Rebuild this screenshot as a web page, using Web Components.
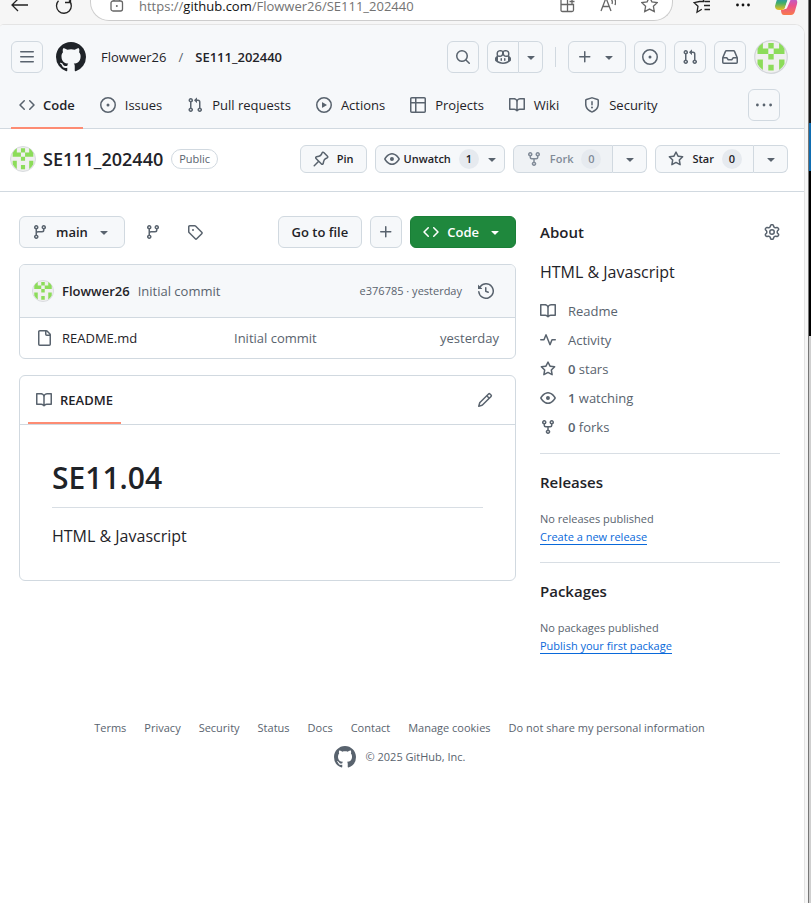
<!DOCTYPE html>
<html lang="en">
<head>
<meta charset="utf-8">
<title>Flowwer26/SE111_202440</title>
<style>
  html { height: 100%; }
  body {
    margin: 0;
    min-height: 100%;
    display: flex;
    background: #f6f6f6;
    color: #1f2328;
    font-family: "Open Sans", "Noto Sans", sans-serif;
    font-size: 13px;
    line-height: 20px;
    --muted: #59636e;
    --line: #d1d9e0;
    --soft: #f6f8fa;
    --accent: #fd8c73;
  }
</style>
</head>
<body>
<app-window></app-window>
<desktop-edge></desktop-edge>

<script>
const ICONS = {
  menu: 'M1 2.75A.75.75 0 0 1 1.75 2h12.5a.75.75 0 0 1 0 1.5H1.75A.75.75 0 0 1 1 2.75Zm0 5A.75.75 0 0 1 1.75 7h12.5a.75.75 0 0 1 0 1.5H1.75A.75.75 0 0 1 1 7.75ZM1.75 12h12.5a.75.75 0 0 1 0 1.5H1.75a.75.75 0 0 1 0-1.5Z',
  mark: 'M8 0c4.42 0 8 3.58 8 8a8.013 8.013 0 0 1-5.45 7.59c-.4.08-.55-.17-.55-.38 0-.27.01-1.13.01-2.2 0-.75-.25-1.23-.54-1.48 1.78-.2 3.65-.88 3.65-3.95 0-.88-.31-1.59-.82-2.15.08-.2.36-1.02-.08-2.12 0 0-.67-.22-2.2.82-.64-.18-1.32-.27-2-.27-.68 0-1.36.09-2 .27-1.53-1.03-2.2-.82-2.2-.82-.44 1.1-.16 1.92-.08 2.12-.51.56-.82 1.28-.82 2.15 0 3.06 1.86 3.75 3.64 3.95-.23.2-.44.55-.51 1.07-.46.21-1.61.55-2.33-.66-.15-.24-.6-.83-1.23-.82-.67.01-.27.38.01.53.34.19.73.9.82 1.13.16.45.68 1.31 2.69.94 0 .67.01 1.3.01 1.49 0 .21-.15.45-.55.38A7.995 7.995 0 0 1 0 8c0-4.42 3.58-8 8-8Z',
  search: 'M10.68 11.74a6 6 0 0 1-7.922-8.982 6 6 0 0 1 8.982 7.922l3.04 3.04a.749.749 0 0 1-.326 1.275.749.749 0 0 1-.734-.215ZM11.5 7a4.499 4.499 0 1 0-8.997 0A4.499 4.499 0 0 0 11.5 7Z',
  copilot: 'M7.998 15.035c-4.562 0-7.873-2.914-7.998-3.749V9.338c.085-.628.677-1.686 1.588-2.065.013-.07.024-.143.036-.218.029-.183.06-.384.126-.612-.201-.508-.254-1.084-.254-1.656 0-.87.128-1.769.693-2.484.579-.733 1.494-1.124 2.724-1.261 1.206-.134 2.262.034 2.944.765.05.053.096.108.139.165.044-.057.094-.112.143-.165.682-.731 1.738-.899 2.944-.765 1.23.137 2.145.528 2.724 1.261.566.715.693 1.614.693 2.484 0 .572-.053 1.148-.254 1.656.066.228.098.429.126.612.012.076.024.148.037.218.924.385 1.522 1.471 1.591 2.095v1.872c0 .766-3.351 3.795-8.002 3.795Zm0-1.485c2.28 0 4.584-1.11 5.002-1.433V7.862l-.023-.116c-.49.21-1.075.291-1.727.291-1.146 0-2.059-.327-2.71-.991A3.222 3.222 0 0 1 8 6.303a3.24 3.24 0 0 1-.544.743c-.65.664-1.563.991-2.71.991-.652 0-1.236-.081-1.727-.291l-.023.116v4.255c.419.323 2.722 1.433 5.002 1.433ZM6.762 2.83c-.193-.206-.637-.413-1.682-.297-1.019.113-1.479.404-1.713.7-.247.312-.369.789-.369 1.554 0 .793.129 1.171.308 1.371.162.181.519.379 1.442.379.853 0 1.339-.235 1.638-.54.315-.322.527-.827.617-1.553.117-.935-.037-1.395-.241-1.614Zm4.155-.297c-1.044-.116-1.488.091-1.681.297-.204.219-.359.679-.242 1.614.091.726.303 1.231.618 1.553.299.305.784.54 1.638.54.922 0 1.28-.198 1.442-.379.179-.2.308-.578.308-1.371 0-.765-.123-1.242-.37-1.554-.233-.296-.693-.587-1.713-.7Z M6.25 9.037a.75.75 0 0 1 .75.75v1.501a.75.75 0 0 1-1.5 0V9.787a.75.75 0 0 1 .75-.75Zm4.25.75v1.501a.75.75 0 0 1-1.5 0V9.787a.75.75 0 0 1 1.5 0Z',
  caret: 'm4.427 7.427 3.396 3.396a.25.25 0 0 0 .354 0l3.396-3.396A.25.25 0 0 0 11.396 7H4.604a.25.25 0 0 0-.177.427Z',
  plus: 'M7.75 2a.75.75 0 0 1 .75.75V7h4.25a.75.75 0 0 1 0 1.5H8.5v4.25a.75.75 0 0 1-1.5 0V8.5H2.75a.75.75 0 0 1 0-1.5H7V2.75A.75.75 0 0 1 7.75 2Z',
  issue: 'M8 9.5a1.5 1.5 0 1 0 0-3 1.5 1.5 0 0 0 0 3Z M8 0a8 8 0 1 1 0 16A8 8 0 0 1 8 0ZM1.5 8a6.5 6.5 0 1 0 13 0 6.5 6.5 0 0 0-13 0Z',
  pull: 'M1.5 3.25a2.25 2.25 0 1 1 3 2.122v5.256a2.251 2.251 0 1 1-1.5 0V5.372A2.25 2.25 0 0 1 1.5 3.25Zm5.677-.177L9.573.677A.25.25 0 0 1 10 .854V2.5h1A2.5 2.5 0 0 1 13.5 5v5.628a2.251 2.251 0 1 1-1.5 0V5a1 1 0 0 0-1-1h-1v1.646a.25.25 0 0 1-.427.177L7.177 3.427a.25.25 0 0 1 0-.354ZM3.75 2.5a.75.75 0 1 0 0 1.5.75.75 0 0 0 0-1.5Zm0 9.5a.75.75 0 1 0 0 1.5.75.75 0 0 0 0-1.5Zm8.25.75a.75.75 0 1 0 1.5 0 .75.75 0 0 0-1.5 0Z',
  inbox: 'M2.8 2.06A1.75 1.75 0 0 1 4.41 1h7.18c.7 0 1.333.417 1.61 1.06l2.74 6.395c.04.093.06.194.06.295v4.5A1.75 1.75 0 0 1 14.25 15H1.75A1.75 1.75 0 0 1 0 13.25v-4.5c0-.101.02-.202.06-.295Zm1.61.44a.25.25 0 0 0-.23.152L1.887 8H4.75a.75.75 0 0 1 .6.3L6.625 10h2.75l1.275-1.7a.75.75 0 0 1 .6-.3h2.863L11.82 2.652a.25.25 0 0 0-.23-.152Zm10.09 7h-2.875l-1.275 1.7a.75.75 0 0 1-.6.3h-3.5a.75.75 0 0 1-.6-.3L4.375 9.5H1.5v3.75c0 .138.112.25.25.25h12.5a.25.25 0 0 0 .25-.25Z',
  code: 'm11.28 3.22 4.25 4.25a.75.75 0 0 1 0 1.06l-4.25 4.25a.749.749 0 0 1-1.275-.326.749.749 0 0 1 .215-.734L13.94 8l-3.72-3.72a.749.749 0 0 1 .326-1.275.749.749 0 0 1 .734.215Zm-6.56 0a.751.751 0 0 1 1.042.018.751.751 0 0 1 .018 1.042L2.06 8l3.72 3.72a.749.749 0 0 1-.326 1.275.749.749 0 0 1-.734-.215L.47 8.53a.75.75 0 0 1 0-1.06Z',
  play: 'M8 0a8 8 0 1 1 0 16A8 8 0 0 1 8 0ZM1.5 8a6.5 6.5 0 1 0 13 0 6.5 6.5 0 0 0-13 0Zm4.879-2.773 4.264 2.559a.25.25 0 0 1 0 .428l-4.264 2.559A.25.25 0 0 1 6 10.559V5.442a.25.25 0 0 1 .379-.215Z',
  table: 'M0 1.75C0 .784.784 0 1.75 0h12.5C15.216 0 16 .784 16 1.75v12.5A1.75 1.75 0 0 1 14.25 16H1.75A1.75 1.75 0 0 1 0 14.25ZM6.5 6.5v8h7.75a.25.25 0 0 0 .25-.25V6.5Zm8-1.5V1.75a.25.25 0 0 0-.25-.25H6.5V5Zm-13 1.5v7.75c0 .138.112.25.25.25H5v-8ZM5 5V1.5H1.75a.25.25 0 0 0-.25.25V5Z',
  book: 'M0 1.75A.75.75 0 0 1 .75 1h4.253c1.227 0 2.317.59 3 1.501A3.743 3.743 0 0 1 11.006 1h4.245a.75.75 0 0 1 .75.75v10.5a.75.75 0 0 1-.75.75h-4.507a2.25 2.25 0 0 0-1.591.659l-.622.621a.75.75 0 0 1-1.06 0l-.622-.621A2.25 2.25 0 0 0 5.258 13H.75a.75.75 0 0 1-.75-.75Zm7.251 10.324.004-5.073-.002-2.253A2.25 2.25 0 0 0 5.003 2.5H1.5v9h3.757a3.75 3.75 0 0 1 1.994.574ZM8.755 4.75l-.004 7.322a3.752 3.752 0 0 1 1.992-.572H14.5v-9h-3.495a2.25 2.25 0 0 0-2.25 2.25Z',
  shield: 'M7.467.133a1.748 1.748 0 0 1 1.066 0l5.25 1.68A1.75 1.75 0 0 1 15 3.48V7c0 1.566-.32 3.182-1.303 4.682-.983 1.498-2.585 2.813-5.032 3.855a1.697 1.697 0 0 1-1.33 0c-2.447-1.042-4.049-2.357-5.032-3.855C1.32 10.182 1 8.566 1 7V3.48a1.755 1.755 0 0 1 1.217-1.667Zm.61 1.429a.25.25 0 0 0-.153 0l-5.25 1.68a.25.25 0 0 0-.174.238V7c0 1.358.275 2.666 1.057 3.86.784 1.194 2.121 2.34 4.366 3.297a.196.196 0 0 0 .154 0c2.245-.956 3.582-2.104 4.366-3.298C13.225 9.666 13.5 8.36 13.5 7V3.48a.251.251 0 0 0-.174-.237l-5.25-1.68ZM8.75 4.75v3a.75.75 0 0 1-1.5 0v-3a.75.75 0 0 1 1.5 0ZM9 10.5a1 1 0 1 1-2 0 1 1 0 0 1 2 0Z',
  dots: 'M0 8a1.4 1.4 0 1 1 2.8 0 1.4 1.4 0 0 1-2.8 0ZM6.6 8a1.4 1.4 0 1 1 2.8 0 1.4 1.4 0 0 1-2.8 0ZM13.2 8a1.4 1.4 0 1 1 2.8 0 1.4 1.4 0 0 1-2.8 0Z',
  pin: 'm11.294.984 3.722 3.722a1.75 1.75 0 0 1-.504 2.826l-1.327.613a3.089 3.089 0 0 0-1.707 2.084l-.584 2.454c-.317 1.332-1.972 1.8-2.94.832L5.75 11.311 1.78 15.28a.749.749 0 1 1-1.06-1.06l3.969-3.97-2.204-2.204c-.968-.968-.5-2.623.832-2.94l2.454-.584a3.08 3.08 0 0 0 2.084-1.707l.613-1.327a1.75 1.75 0 0 1 2.826-.504ZM6.283 9.723l2.732 2.731a.25.25 0 0 0 .42-.119l.584-2.454a4.586 4.586 0 0 1 2.537-3.098l1.328-.613a.25.25 0 0 0 .072-.404l-3.722-3.722a.25.25 0 0 0-.404.072l-.613 1.328a4.584 4.584 0 0 1-3.098 2.537l-2.454.584a.25.25 0 0 0-.119.42l2.731 2.732Z',
  eye: 'M8 2c1.981 0 3.671.992 4.933 2.078 1.27 1.091 2.187 2.345 2.637 3.023a1.62 1.62 0 0 1 0 1.798c-.45.678-1.367 1.932-2.637 3.023C11.67 13.008 9.981 14 8 14c-1.981 0-3.671-.992-4.933-2.078C1.797 10.83.88 9.576.43 8.898a1.62 1.62 0 0 1 0-1.798c.45-.677 1.367-1.931 2.637-3.022C4.33 2.992 6.019 2 8 2ZM1.679 7.932a.12.12 0 0 0 0 .136c.411.622 1.241 1.75 2.366 2.717C5.176 11.758 6.527 12.5 8 12.5c1.473 0 2.825-.742 3.955-1.715 1.124-.967 1.954-2.096 2.366-2.717a.12.12 0 0 0 0-.136c-.412-.621-1.242-1.75-2.366-2.717C10.824 4.242 9.473 3.5 8 3.5c-1.473 0-2.825.742-3.955 1.715-1.124.967-1.954 2.096-2.366 2.717ZM8 10a2 2 0 1 1-.001-3.999A2 2 0 0 1 8 10Z',
  fork: 'M5 5.372v.878c0 .414.336.75.75.75h4.5a.75.75 0 0 0 .75-.75v-.878a2.25 2.25 0 1 1 1.5 0v.878a2.25 2.25 0 0 1-2.25 2.25h-1.5v2.128a2.251 2.251 0 1 1-1.5 0V8.5h-1.5A2.25 2.25 0 0 1 3.5 6.25v-.878a2.25 2.25 0 1 1 1.5 0ZM5 3.25a.75.75 0 1 0-1.5 0 .75.75 0 0 0 1.5 0Zm6.75.75a.75.75 0 1 0 0-1.5.75.75 0 0 0 0 1.5Zm-3 8.75a.75.75 0 1 0-1.5 0 .75.75 0 0 0 1.5 0Z',
  star: 'M8 .25a.75.75 0 0 1 .673.418l1.882 3.815 4.21.612a.75.75 0 0 1 .416 1.279l-3.046 2.97.719 4.192a.751.751 0 0 1-1.088.791L8 12.347l-3.766 1.98a.75.75 0 0 1-1.088-.79l.72-4.194L.818 6.374a.75.75 0 0 1 .416-1.28l4.21-.611L7.327.668A.75.75 0 0 1 8 .25Zm0 2.445L6.615 5.5a.75.75 0 0 1-.564.41l-3.097.45 2.24 2.184a.75.75 0 0 1 .216.664l-.528 3.084 2.769-1.456a.75.75 0 0 1 .698 0l2.77 1.456-.53-3.084a.75.75 0 0 1 .216-.664l2.24-2.183-3.096-.45a.75.75 0 0 1-.564-.41L8 2.694Z',
  branch: 'M9.5 3.25a2.25 2.25 0 1 1 3 2.122V6A2.5 2.5 0 0 1 10 8.5H6a1 1 0 0 0-1 1v1.128a2.251 2.251 0 1 1-1.5 0V5.372a2.25 2.25 0 1 1 1.5 0v1.836A2.493 2.493 0 0 1 6 7h4a1 1 0 0 0 1-1v-.628A2.25 2.25 0 0 1 9.5 3.25Zm-6 0a.75.75 0 1 0 1.5 0 .75.75 0 0 0-1.5 0Zm8.25-.75a.75.75 0 1 0 0 1.5.75.75 0 0 0 0-1.5ZM4.25 12a.75.75 0 1 0 0 1.5.75.75 0 0 0 0-1.5Z',
  tag: 'M1 7.775V2.75C1 1.784 1.784 1 2.75 1h5.025c.464 0 .91.184 1.238.513l6.25 6.25a1.75 1.75 0 0 1 0 2.474l-5.026 5.026a1.75 1.75 0 0 1-2.474 0l-6.25-6.25A1.752 1.752 0 0 1 1 7.775Zm1.5 0c0 .066.026.13.073.177l6.25 6.25a.25.25 0 0 0 .354 0l5.025-5.025a.25.25 0 0 0 0-.354l-6.25-6.25a.25.25 0 0 0-.177-.073H2.75a.25.25 0 0 0-.25.25ZM6 5a1 1 0 1 1 0 2 1 1 0 0 1 0-2Z',
  history: 'm.427 1.927 1.215 1.215a8.002 8.002 0 1 1-1.6 5.685.75.75 0 1 1 1.493-.154 6.5 6.5 0 1 0 1.18-4.458l1.358 1.358A.25.25 0 0 1 3.896 6H.25A.25.25 0 0 1 0 5.75V2.104a.25.25 0 0 1 .427-.177ZM7.75 4a.75.75 0 0 1 .75.75v2.992l2.028.812a.75.75 0 0 1-.557 1.392l-2.5-1A.751.751 0 0 1 7 8.25v-3.5A.75.75 0 0 1 7.75 4Z',
  file: 'M2 1.75C2 .784 2.784 0 3.75 0h6.586c.464 0 .909.184 1.237.513l2.914 2.914c.329.328.513.773.513 1.237v9.586A1.75 1.75 0 0 1 13.25 16h-9.5A1.75 1.75 0 0 1 2 14.25Zm1.75-.25a.25.25 0 0 0-.25.25v12.5c0 .138.112.25.25.25h9.5a.25.25 0 0 0 .25-.25V6h-2.75A1.75 1.75 0 0 1 9 4.25V1.5Zm6.75.062V4.25c0 .138.112.25.25.25h2.688l-.011-.013-2.914-2.914-.013-.011Z',
  pencil: 'M11.013 1.427a1.75 1.75 0 0 1 2.474 0l1.086 1.086a1.75 1.75 0 0 1 0 2.474l-8.61 8.61c-.21.21-.47.364-.756.445l-3.251.93a.75.75 0 0 1-.927-.928l.929-3.25c.081-.286.235-.547.445-.758l8.61-8.61Zm.176 4.823L9.75 4.81l-6.286 6.287a.253.253 0 0 0-.064.108l-.558 1.953 1.953-.558a.253.253 0 0 0 .108-.064Zm1.238-3.763a.25.25 0 0 0-.354 0L10.811 3.75l1.439 1.44 1.263-1.263a.25.25 0 0 0 0-.354Z',
  pulse: 'M6 2c.306 0 .582.187.696.471L10 10.731l1.304-3.26A.751.751 0 0 1 12 7h3.25a.75.75 0 0 1 0 1.5h-2.742l-1.812 4.528a.751.751 0 0 1-1.392 0L6 4.77 4.696 8.03A.75.75 0 0 1 4 8.5H.75a.75.75 0 0 1 0-1.5h2.742l1.812-4.529A.751.751 0 0 1 6 2Z',
  gear: 'M8 0a8.2 8.2 0 0 1 .701.031C9.444.095 9.99.645 10.16 1.29l.288 1.107c.018.066.079.158.212.224.231.114.454.243.668.386.123.082.233.09.299.071l1.103-.303c.644-.176 1.392.021 1.82.63.27.385.506.792.704 1.218.315.675.111 1.422-.364 1.891l-.814.806c-.049.048-.098.147-.088.294.016.257.016.515 0 .772-.01.147.038.246.088.294l.814.806c.475.469.679 1.216.364 1.891a7.977 7.977 0 0 1-.704 1.217c-.428.61-1.176.807-1.82.63l-1.102-.302c-.067-.019-.177-.011-.3.071a5.909 5.909 0 0 1-.668.386c-.133.066-.194.158-.211.224l-.29 1.106c-.168.646-.715 1.196-1.458 1.26a8.006 8.006 0 0 1-1.402 0c-.743-.064-1.289-.614-1.458-1.26l-.289-1.106c-.018-.066-.079-.158-.212-.224a5.738 5.738 0 0 1-.668-.386c-.123-.082-.233-.09-.299-.071l-1.103.303c-.644.176-1.392-.021-1.82-.63a8.12 8.12 0 0 1-.704-1.218c-.315-.675-.111-1.422.363-1.891l.815-.806c.05-.048.098-.147.088-.294a6.214 6.214 0 0 1 0-.772c.01-.147-.038-.246-.088-.294l-.815-.806C.635 6.045.431 5.298.746 4.623a7.92 7.92 0 0 1 .704-1.217c.428-.61 1.176-.807 1.82-.63l1.102.302c.067.019.177.011.3-.071.214-.143.437-.272.668-.386.133-.066.194-.158.211-.224l.29-1.106C6.009.645 6.556.095 7.299.03 7.53.01 7.764 0 8 0Zm-.571 1.525c-.036.003-.108.036-.137.146l-.289 1.105c-.147.561-.549.967-.998 1.189-.173.086-.34.183-.5.29-.417.278-.97.423-1.529.27l-1.103-.303c-.109-.03-.175.016-.195.045-.22.312-.412.644-.573.99-.014.031-.021.11.059.19l.815.806c.411.406.562.957.53 1.456a4.709 4.709 0 0 0 0 .582c.032.499-.119 1.05-.53 1.456l-.815.806c-.081.08-.073.159-.059.19.162.346.353.677.573.989.02.03.085.076.195.046l1.102-.303c.56-.153 1.113-.008 1.53.27.161.107.328.204.501.29.447.222.85.629.997 1.189l.289 1.105c.029.109.101.143.137.146a6.6 6.6 0 0 0 1.142 0c.036-.003.108-.036.137-.146l.289-1.105c.147-.561.549-.967.998-1.189.173-.086.34-.183.5-.29.417-.278.97-.423 1.529-.27l1.103.303c.109.029.175-.016.195-.045.22-.313.411-.644.573-.99.014-.031.021-.11-.059-.19l-.815-.806c-.411-.406-.562-.957-.53-1.456a4.709 4.709 0 0 0 0-.582c-.032-.499.119-1.05.53-1.456l.815-.806c.081-.08.073-.159.059-.19a6.464 6.464 0 0 0-.573-.989c-.02-.03-.085-.076-.195-.046l-1.102.303c-.56.153-1.113.008-1.53-.27a4.44 4.44 0 0 0-.501-.29c-.447-.222-.85-.629-.997-1.189l-.289-1.105c-.029-.11-.101-.143-.137-.146a6.6 6.6 0 0 0-1.142 0ZM11 8a3 3 0 1 1-6 0 3 3 0 0 1 6 0ZM9.5 8a1.5 1.5 0 1 0-3.001.001A1.5 1.5 0 0 0 9.5 8Z'
};

function define(name, html, setup) {
  const template = document.createElement('template');
  template.innerHTML = html;
  customElements.define(name, class extends HTMLElement {
    constructor() {
      super();
      this.attachShadow({ mode: 'open' }).append(template.content.cloneNode(true));
    }
    connectedCallback() { if (setup) setup(this, this.shadowRoot); }
  });
}

/* Shared look of buttons and links inside the shadow roots */
const CONTROLS = `
  * { box-sizing: border-box; }
  a { color: inherit; text-decoration: none; }
  p, ul { margin: 0; padding: 0; }
  ul { list-style: none; }
  button {
    font: inherit; color: inherit; margin: 0; cursor: pointer;
    display: inline-flex; align-items: center; justify-content: center;
    border: 1px solid var(--line); border-radius: 6px; background: var(--soft);
    white-space: nowrap; padding: 0; flex: none;
  }
  button.plain { border: 0; background: none; }
  a.icon { display: flex; }
  gh-icon { color: var(--muted); }
  .split { display: flex; flex: none; }
  .split button:first-child { border-radius: 6px 0 0 6px; }
  .split button:last-child { border-radius: 0 6px 6px 0; border-left: 0; }
`;

define('gh-icon', `
  <style>
    :host { display: inline-flex; flex: none; width: var(--size, 16px); height: var(--size, 16px); }
    svg { width: 100%; height: 100%; fill: currentColor; }
  </style>
  <svg viewBox="0 0 16 16" aria-hidden="true"><path/></svg>`,
  (el, root) => root.querySelector('path').setAttribute('d', ICONS[el.getAttribute('name')]));

define('user-avatar', `
  <style>
    :host { display: block; flex: none; width: var(--size, 20px); height: var(--size, 20px); }
    svg { display: block; width: 100%; height: 100%; }
  </style>
  <svg viewBox="0 0 34 34" role="img" aria-label="Flowwer26">
    <circle cx="17" cy="17" r="16.3" fill="#f0f0f0" stroke="#d3d6da" stroke-width="1.2"/>
    <path fill="#8cdc5a" d="M3.5 9Q5 5.500 8.900 3V8.600H14.300V3H19.700V8.600H25.100V3Q29 5.500 30.500 9V14H19.700V8.600H14.300V14H3.500zM14.300 14h5.400v5.400h-5.400zM3.500 19.400h5.400V30Q5 27 3.500 24zM25.100 19.400h5.400V24Q29 27 25.100 30zM14.300 24.800h5.400v5.600h-5.400z"/>
  </svg>`);

define('browser-bar', `
  <style>${CONTROLS}
    :host { display: flex; align-items: flex-start; height: 24px; padding: 0 10px 0 11px; color: #111; box-sizing: border-box; }
    button { border: 0; background: none; }
    svg { display: block; height: 21px; fill: none; stroke: #222; stroke-width: 1.3; }
    .nav { display: flex; gap: 27px; }
    .address { flex: 1; min-width: 0; display: flex; align-items: flex-start; height: 21px; margin: 0 20px 0 18px; padding: 0 14px 0 19px; border: 1px solid #cdcdcd; border-top: 0; border-radius: 0 0 19px 19px; background: #fff; }
    .address svg { stroke: #666; }
    .url { flex: 1; min-width: 0; margin: 0 15px; line-height: 12px; color: #737373; white-space: nowrap; }
    .url b { font-weight: 400; color: #111; }
    .tools { display: flex; gap: 25px; }
    .side { display: flex; gap: 25px; }
  </style>
  <div class="nav">
    <button aria-label="Back"><svg width="17" viewBox="0 0 17 21"><path d="M17 5H1M7-1l-6 6 6 6"/></svg></button>
    <button aria-label="Refresh"><svg width="17" viewBox="0 0 17 21"><path d="M14 .5A7.400 7.400 0 1 1 3.500.8M10 2.500h5.500V-3"/></svg></button>
  </div>
  <div class="address">
    <svg width="14" viewBox="0 0 14 21"><rect x="1" y="1" width="11.500" height="10" rx="2"/><path d="M4 1V-3M9.500 1V-3"/><circle cx="6.800" cy="6" r="1" fill="#666" stroke="none"/></svg>
    <div class="url">https://<b>github.com</b>/Flowwer26/SE111_202440</div>
    <div class="tools">
      <button aria-label="App available"><svg width="15" viewBox="0 0 15 21"><path d="M1 5.500V-2M7.500 11.500H2.500q-1.500 0-1.500-1.500V4.500h12.500V10q0 1.500-1.500 1.500H7.500V-2M9.500 1.500h5M12-1v5"/></svg></button>
      <button aria-label="Read aloud"><svg width="16" viewBox="0 0 16 21"><path d="M1 11 6-2l5 13M3 6.500h6M11-1q2 2 1 5M14-2q2.500 3 1 7"/></svg></button>
      <button aria-label="Add to favourites"><svg width="17" viewBox="0 0 17 21"><path d="m8.500-3 2.400 4.800 5.300.8-3.800 3.700.9 5.300-4.800-2.500-4.800 2.500.9-5.300L.8 2.600l5.300-.8z"/></svg></button>
    </div>
  </div>
  <div class="side">
    <button aria-label="Favourites"><svg width="18" viewBox="0 0 18 21"><path d="M11 1.500H6.500L1 2.600l4 3.600-1 6 4.800-3M11 1.500 9-3M11.500 1.500H17M11 5.500h6M11.500 9.500H17"/></svg></button>
    <button aria-label="More"><svg width="14" viewBox="0 0 14 21"><g fill="#111" stroke="none"><circle cx="1.500" cy="5" r="1.400"/><circle cx="7" cy="5" r="1.400"/><circle cx="12.500" cy="5" r="1.400"/></g></svg></button>
    <button aria-label="Copilot"><svg width="23" viewBox="0 0 23 21">
      <defs>
        <linearGradient id="a" x1="0" y1="0" x2="0" y2="1"><stop offset="0" stop-color="#1f7fe0"/><stop offset=".5" stop-color="#3fae6a"/><stop offset="1" stop-color="#f0c020"/></linearGradient>
        <linearGradient id="b" x1="0" y1="0" x2="0" y2="1"><stop offset="0" stop-color="#a560e8"/><stop offset=".5" stop-color="#e9508f"/><stop offset="1" stop-color="#f97a4a"/></linearGradient>
      </defs>
      <path stroke="none" fill="url(#a)" d="M3-4h11L10 8q-1 2-3 2H4Q0 10 0 6z"/>
      <path stroke="none" fill="url(#b)" d="M14-4h3q2 0 2 2l1 1q3 1 2 5l-2 7q-1 4-4 4H9q-3 0-3-5h2q2 0 3-3z"/>
      <path stroke="none" fill="#f6f6f6" d="m12.500 0h3L12 8q-.5 1-1.500 1H9.500z"/>
    </svg></button>
  </div>`);

define('site-header', `
  <style>${CONTROLS}
    :host { display: flex; align-items: center; padding: 15px 16px 7px 11px; }
    button { width: 32px; height: 32px; }
    .menu { margin-right: 13px; }
    .logo { display: flex; --size: 30px; margin-right: 15px; }
    .logo gh-icon { color: #1f2328; }
    .crumbs { flex: 1; min-width: 0; display: flex; gap: 12px; white-space: nowrap; }
    .crumbs b { font-weight: 600; }
    .sep { color: var(--muted); }
    .actions { display: flex; align-items: center; gap: 8px; }
    .split button:last-child { width: 24px; }
    .rule { width: 1px; height: 20px; background: var(--line); margin: 0 4px; }
    .create { width: 58px; gap: 8px; }
    user-avatar { --size: 34px; }
  </style>
  <button class="menu" aria-label="Open menu"><gh-icon name="menu"></gh-icon></button>
  <a class="logo" href="#home" aria-label="Homepage"><gh-icon name="mark"></gh-icon></a>
  <div class="crumbs"><a href="#owner">Flowwer26</a><span class="sep">/</span><a href="#repo"><b>SE111_202440</b></a></div>
  <div class="actions">
    <button aria-label="Search"><gh-icon name="search"></gh-icon></button>
    <div class="split"><button aria-label="Copilot"><gh-icon name="copilot"></gh-icon></button><button aria-label="Copilot options"><gh-icon name="caret"></gh-icon></button></div>
    <span class="rule"></span>
    <button class="create" aria-label="Create new"><gh-icon name="plus"></gh-icon><gh-icon name="caret"></gh-icon></button>
    <button aria-label="Issues"><gh-icon name="issue"></gh-icon></button>
    <button aria-label="Pull requests"><gh-icon name="pull"></gh-icon></button>
    <button aria-label="Inbox"><gh-icon name="inbox"></gh-icon></button>
    <a href="#profile" aria-label="Profile"><user-avatar></user-avatar></a>
  </div>`);

define('nav-tab', `
  <style>${CONTROLS}
    :host { display: block; }
    a { display: flex; align-items: center; gap: 9px; height: 48px; padding: 0 8px; border-bottom: 2px solid transparent; border-top: 2px solid transparent; white-space: nowrap; }
    :host([current]) a { border-bottom-color: var(--accent); font-weight: 600; gap: 8px; }
  </style>
  <a href="#tab"><gh-icon></gh-icon><slot></slot></a>`,
  (el, root) => {
    const icon = document.createElement('gh-icon');
    icon.setAttribute('name', el.getAttribute('icon'));
    root.querySelector('gh-icon').replaceWith(icon);
    if (el.hasAttribute('current')) root.querySelector('a').setAttribute('aria-current', 'page');
  });

define('repo-nav', `
  <style>${CONTROLS}
    :host { display: flex; align-items: center; justify-content: space-between; padding: 0 24px 0 11px; border-bottom: 1px solid var(--line); box-sizing: border-box; height: 48px; }
    nav { display: flex; gap: 9px; margin-bottom: -1px; }
    button { width: 32px; height: 32px; }
  </style>
  <nav aria-label="Repository"><slot></slot></nav>
  <button aria-label="More tabs"><gh-icon name="dots"></gh-icon></button>`);

define('repo-head', `
  <style>${CONTROLS}
    :host { display: flex; align-items: center; padding: 16px 16px 18px 10px; border-bottom: 1px solid var(--line); }
    user-avatar { --size: 26px; margin-right: 7px; }
    h1 { margin: 0; font-size: 18px; line-height: 28px; font-weight: 600; }
    .pill { margin-left: 8px; padding: 0 7px; border: 1px solid var(--line); border-radius: 10px; font-size: 11px; line-height: 18px; font-weight: 500; color: var(--muted); }
    .actions { flex: 1; display: flex; justify-content: flex-end; gap: 8px; font-size: 11px; font-weight: 600; }
    button { height: 28px; padding: 0 12px; gap: 8px; }
    .count { min-width: 20px; border-radius: 10px; background: #e6eaef; line-height: 20px; text-align: center; }
    .watch { padding: 0 4px 0 8px; gap: 4px; }
    .watch .count { margin: 0 1px 0 4px; }
    .split button:last-child { width: 34px; padding: 0; }
    .split button:first-child { padding-right: 11px; }
    button:disabled { color: #818b98; background: #eff2f5; }
    button:disabled gh-icon { color: #818b98; }
  </style>
  <user-avatar></user-avatar><h1>SE111_202440</h1><span class="pill">Public</span>
  <div class="actions">
    <button><gh-icon name="pin"></gh-icon>Pin</button>
    <button class="watch"><gh-icon name="eye"></gh-icon>Unwatch<span class="count">1</span><gh-icon name="caret"></gh-icon></button>
    <div class="split"><button disabled><gh-icon name="fork"></gh-icon>Fork<span class="count">0</span></button><button aria-label="Fork options"><gh-icon name="caret"></gh-icon></button></div>
    <div class="split"><button><gh-icon name="star"></gh-icon>Star<span class="count">0</span></button><button aria-label="Star options"><gh-icon name="caret"></gh-icon></button></div>
  </div>`);

define('file-toolbar', `
  <style>${CONTROLS}
    :host { display: flex; gap: 8px; font-weight: 600; }
    button { height: 32px; padding: 0 12px; gap: 8px; }
    .square { width: 32px; padding: 0; }
    .links { flex: 1; display: flex; align-items: center; gap: 26px; padding-left: 12px; }
    .goto { padding: 0 13px; }
    .code { background: #1f883d; border-color: #1a7f37; color: #fff; }
    .code gh-icon { color: #fff; }
  </style>
  <button><gh-icon name="branch"></gh-icon>main<gh-icon name="caret"></gh-icon></button>
  <div class="links">
    <a class="icon" href="#branches" aria-label="Branches"><gh-icon name="branch"></gh-icon></a>
    <a class="icon" href="#tags" aria-label="Tags"><gh-icon name="tag"></gh-icon></a>
  </div>
  <button class="goto">Go to file</button>
  <button class="square" aria-label="Add file"><gh-icon name="plus"></gh-icon></button>
  <button class="code"><gh-icon name="code"></gh-icon>Code<gh-icon name="caret"></gh-icon></button>`);

define('file-list', `
  <style>${CONTROLS}
    :host { display: block; border: 1px solid var(--line); border-radius: 6px; overflow: hidden; }
    .commit { display: flex; align-items: center; gap: 8px; height: 53px; padding: 0 21px 0 12px; background: var(--soft); border-bottom: 1px solid var(--line); color: var(--muted); }
    user-avatar { --size: 22px; }
    .commit b { font-weight: 600; color: #1f2328; }
    .meta { flex: 1; text-align: right; font-size: 11px; margin-right: 8px; }
    table { width: 100%; border-collapse: collapse; table-layout: fixed; }
    td { height: 40px; padding: 0; color: var(--muted); }
    td:first-child { width: 214px; padding-left: 16px; }
    td:last-child { text-align: right; padding-right: 16px; }
    .name { display: flex; align-items: center; gap: 10px; color: #1f2328; }
  </style>
  <div class="commit">
    <user-avatar></user-avatar><a href="#owner"><b>Flowwer26</b></a><a href="#commit">Initial commit</a>
    <span class="meta"><a href="#sha">e376785</a> · yesterday</span>
    <a class="icon" href="#history" aria-label="History"><gh-icon name="history"></gh-icon></a>
  </div>
  <table aria-label="Files"><tbody><tr>
    <td><a class="name" href="#readme"><gh-icon name="file"></gh-icon>README.md</a></td>
    <td><a href="#commit">Initial commit</a></td>
    <td>yesterday</td>
  </tr></tbody></table>`);

define('readme-card', `
  <style>${CONTROLS}
    :host { display: block; border: 1px solid var(--line); border-radius: 6px; }
    .bar { display: flex; align-items: center; border-bottom: 1px solid var(--line); padding: 0 22px 0 8px; }
    .tabs { flex: 1; display: flex; }
    .edit { padding-left: 8px; }
    article { padding: 32px; font-size: 16px; line-height: 24px; }
    ::slotted(h1) { margin: 0 0 16px; padding-bottom: 9px; border-bottom: 1px solid #d8dee4; font-size: 30px; line-height: 41px; font-weight: 600; }
  </style>
  <div class="bar">
    <div class="tabs"><nav-tab icon="book" current>README</nav-tab></div>
    <a class="icon edit" href="#edit" aria-label="Edit file"><gh-icon name="pencil"></gh-icon></a>
  </div>
  <article><slot></slot></article>`);

define('side-section', `
  <style>${CONTROLS}
    :host { display: block; padding: 16px 0; border-bottom: 1px solid #d8dee4; }
    :host(:first-of-type) { padding-top: 0; }
    :host(:last-of-type) { border: 0; }
    header { display: flex; align-items: center; justify-content: space-between; margin-bottom: 16px; }
    ::slotted(h2) { margin: 0; font-size: 15px; line-height: 24px; font-weight: 600; }
    .body { font-size: 11px; line-height: 18px; color: var(--muted); }
  </style>
  <header><slot name="title"></slot><slot name="action"></slot></header>
  <div class="body"><slot></slot></div>`);

define('repo-sidebar', `
  <style>${CONTROLS}
    :host { display: block; padding-top: 4px; }
    .about { font-size: 16px; line-height: 24px; color: #1f2328; margin-bottom: 17px; }
    ul { display: grid; gap: 9px; font-size: 13px; line-height: 20px; }
    li a { display: flex; align-items: center; gap: 12px; }
    li b { font-weight: 600; }
    .link { color: #0969da; border-bottom: 1px solid #0969da; line-height: 14px; display: inline-block; }
  </style>
  <side-section>
    <h2 slot="title">About</h2>
    <button slot="action" class="plain" aria-label="Edit details"><gh-icon name="gear"></gh-icon></button>
    <p class="about">HTML &amp; Javascript</p>
    <ul>
      <li><a href="#readme"><gh-icon name="book"></gh-icon><span>Readme</span></a></li>
      <li><a href="#activity"><gh-icon name="pulse"></gh-icon><span>Activity</span></a></li>
      <li><a href="#stars"><gh-icon name="star"></gh-icon><span><b>0</b> stars</span></a></li>
      <li><a href="#watchers"><gh-icon name="eye"></gh-icon><span><b>1</b> watching</span></a></li>
      <li><a href="#forks"><gh-icon name="fork"></gh-icon><span><b>0</b> forks</span></a></li>
    </ul>
  </side-section>
  <side-section>
    <h2 slot="title">Releases</h2>
    <p>No releases published</p>
    <a class="link" href="#release">Create a new release</a>
  </side-section>
  <side-section>
    <h2 slot="title">Packages</h2>
    <p>No packages published</p>
    <a class="link" href="#package">Publish your first package</a>
  </side-section>`);

define('site-footer', `
  <style>${CONTROLS}
    :host { display: block; padding: 48px 16px 40px 11px; font-size: 11px; line-height: 18px; color: var(--muted); }
    ul { display: flex; justify-content: center; flex-wrap: wrap; gap: 4px 18px; }
    .owner { display: flex; align-items: center; justify-content: center; gap: 10px; margin-top: 9px; --size: 22px; }
  </style>
  <ul>
    <li><a href="#terms">Terms</a></li><li><a href="#privacy">Privacy</a></li><li><a href="#security">Security</a></li>
    <li><a href="#status">Status</a></li><li><a href="#docs">Docs</a></li><li><a href="#contact">Contact</a></li>
    <li><a href="#cookies">Manage cookies</a></li><li><a href="#share">Do not share my personal information</a></li>
  </ul>
  <div class="owner"><gh-icon name="mark"></gh-icon><span>© 2025 GitHub, Inc.</span></div>`);

define('app-window', `
  <style>${CONTROLS}
    :host { flex: 1; min-width: 0; display: flex; flex-direction: column; }
    .page { flex: 1; margin-right: 3px; background: #fff; border: 1px solid #e4e4e4; border-left: 0; border-bottom: 0; border-radius: 4px 10px 0 0; overflow: hidden; }
    .top { background: var(--soft); }
    main { display: grid; grid-template-columns: minmax(0, 1fr) 240px; gap: 24px; padding: 24px 24px 0 19px; }
    .files { display: grid; gap: 16px; align-content: start; }
  </style>
  <browser-bar></browser-bar>
  <div class="page">
    <div class="top">
      <site-header></site-header>
      <repo-nav>
        <nav-tab icon="code" current>Code</nav-tab>
        <nav-tab icon="issue">Issues</nav-tab>
        <nav-tab icon="pull">Pull requests</nav-tab>
        <nav-tab icon="play">Actions</nav-tab>
        <nav-tab icon="table">Projects</nav-tab>
        <nav-tab icon="book">Wiki</nav-tab>
        <nav-tab icon="shield">Security</nav-tab>
      </repo-nav>
    </div>
    <repo-head></repo-head>
    <main>
      <div class="files">
        <file-toolbar></file-toolbar>
        <file-list></file-list>
        <readme-card><h1>SE11.04</h1><p>HTML &amp; Javascript</p></readme-card>
      </div>
      <repo-sidebar></repo-sidebar>
    </main>
    <site-footer></site-footer>
  </div>`);

define('desktop-edge', `
  <style>
    :host { flex: none; width: 3px; box-sizing: border-box; border-left: 1px solid #777; display: flex; flex-direction: column; }
    i { display: block; background: #171717; flex: none; }
    .top { height: 123px; }
    .blue { height: 48px; background: #0f6cb0; }
    .dark { height: 165px; background: #000; }
    .low { flex: 1; background: #cfcfcf; }
  </style>
  <i class="top"></i><i class="blue"></i><i class="dark"></i><i class="low"></i>`);
</script>
</body>
</html>
